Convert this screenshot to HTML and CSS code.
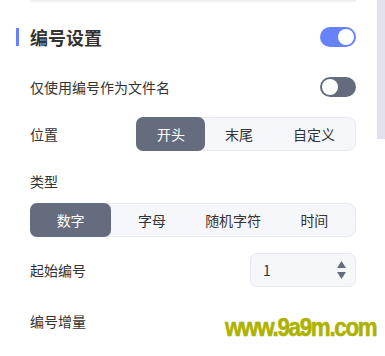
FILE: index.html
```html
<!DOCTYPE html>
<html lang="zh">
  <head>
    <meta charset="UTF-8">
    <title>编号设置</title>
    <link rel="stylesheet" href="styles.css">
  </head>
  <body>
    <div class="page">
      <div class="panel">
        <div class="divider"></div>
        <div class="row header">
          <h3>编号设置</h3>
          <div class="switch on"><span></span></div>
        </div>
        <div class="row first">
          <label>仅使用编号作为文件名</label>
          <div class="switch"><span></span></div>
        </div>
        <div class="row seg-row">
          <label>位置</label>
          <div class="segmented fit">
            <div class="active">开头</div>
            <div>末尾</div>
            <div>自定义</div>
          </div>
        </div>
        <div class="row caption">
          <label>类型</label>
        </div>
        <div class="segmented wide">
          <div class="active">数字</div>
          <div>字母</div>
          <div>随机字符</div>
          <div>时间</div>
        </div>
        <div class="row num-row">
          <label>起始编号</label>
          <div class="number">
            <span>1</span>
            <svg width="9" height="18" viewBox="0 0 9 18">
              <path d="M4.5 0 L9 7 L0 7 Z" fill="#646c7d"/>
              <path d="M0 11 L9 11 L4.5 18 Z" fill="#646c7d"/>
            </svg>
          </div>
        </div>
        <div class="row last">
          <label>编号增量</label>
        </div>
      </div>
      <div class="scrollbar"><div class="thumb"></div></div>
    </div>
    <div class="watermark">www.9a9m.com</div>
  </body>
</html>
```
FILE: styles.css
```css
body {
  margin: 0;
  font-family: "Noto Sans CJK SC", "Noto Sans", sans-serif;
  color: #333;
  background: #fff;
  font-size: 14px;
}

.page {
  display: flex;
  height: 356px;
  overflow: hidden;
}

.panel {
  width: 377px;
  padding: 0 21px 0 30px;
  box-sizing: border-box;
}

.divider {
  height: 2px;
  background: #f0f0f2;
}

.row {
  display: flex;
  align-items: center;
  justify-content: space-between;
  height: 20px;
}

.row label {
  line-height: 20px;
}

.header {
  margin-top: 25px;
  position: relative;
}

.header::before {
  content: "";
  position: absolute;
  left: -14px;
  top: 1px;
  width: 3px;
  height: 18px;
  background: #6680ff;
}

.header h3 {
  margin: 0;
  font-size: 18px;
  font-weight: bold;
  line-height: 20px;
}

.switch {
  width: 36px;
  height: 20px;
  border-radius: 10px;
  background: #646b7c;
  position: relative;
}

.switch span {
  position: absolute;
  top: 2px;
  left: 2px;
  width: 16px;
  height: 16px;
  border-radius: 50%;
  background: #fff;
}

.switch.on {
  background: #6682fd;
}

.switch.on span {
  left: 18px;
}

.first {
  margin-top: 30px;
}

.seg-row {
  margin-top: 20px;
  height: 34px;
}

.segmented {
  display: flex;
  height: 34px;
  box-sizing: border-box;
  border: 1px solid #e7e9ef;
  border-radius: 8px;
  background: #f6f7fa;
}

.segmented div {
  display: flex;
  align-items: center;
  justify-content: center;
  border-radius: 7px;
  color: #333;
}

.segmented .active {
  background: #646c7d;
  color: #fff;
  margin: -1px 0 -1px -1px;
}

.fit div {
  padding: 0 20px;
}

.fit .active {
  padding-left: 21px;
}

.wide {
  margin-top: 12px;
}

.wide div {
  flex: 1;
}

.caption {
  margin-top: 20px;
}

.num-row {
  margin-top: 16px;
  height: 34px;
}

.number {
  width: 106px;
  height: 34px;
  box-sizing: border-box;
  border: 1px solid #e7e9ef;
  border-radius: 7px;
  background: #f6f7fa;
  display: flex;
  align-items: center;
  justify-content: space-between;
  padding: 0 9px 0 12px;
}

.last {
  margin-top: 24px;
}

.scrollbar {
  width: 8px;
}

.scrollbar .thumb {
  height: 139px;
  background: #e2e2ea;
}

.watermark {
  position: absolute;
  left: 225px;
  top: 312px;
  font-family: "Liberation Sans", Arial, sans-serif;
  font-weight: bold;
  font-size: 26px;
  letter-spacing: -1.5px;
  color: #acb200;
  white-space: nowrap;
  transform: scaleX(0.86);
  transform-origin: left top;
  -webkit-text-stroke: 0.6px #acb200;
}
```
